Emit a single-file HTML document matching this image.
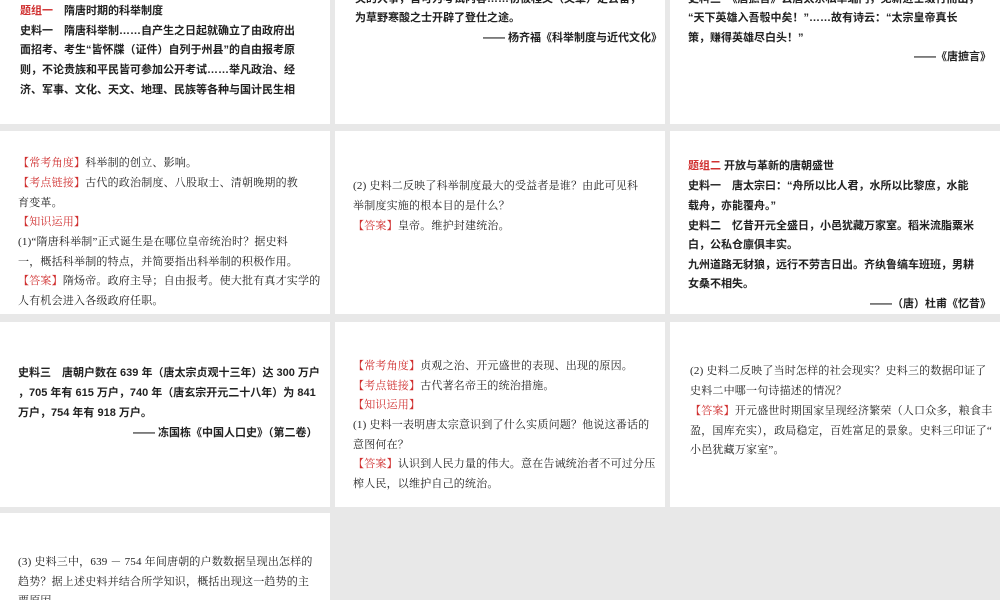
<!DOCTYPE html>
<html><head><meta charset="utf-8"><style>
body{margin:0;width:1000px;height:600px;background:#e8e8e8;position:relative;overflow:hidden;font-family:"Liberation Serif","Noto Serif CJK SC","Noto Sans CJK SC",serif;font-size:11px;color:#222}
.p{position:absolute;background:#fff;overflow:hidden}
.l{position:absolute;white-space:nowrap;line-height:14px;letter-spacing:0.2px}
.b{font-weight:bold;font-family:"Liberation Sans","Noto Sans CJK SC",sans-serif;letter-spacing:0}
.r{color:#d03030}
</style></head><body>
<div class="p" style="left:0;top:0;width:330px;height:124px">
<div class="l b" style="left:20px;top:4px"><span class="r">题组一</span>　隋唐时期的科举制度</div>
<div class="l b" style="left:20px;top:24px">史料一　隋唐科举制……自产生之日起就确立了由政府出</div>
<div class="l b" style="left:20px;top:43px">面招考、考生“皆怀牒（证件）自列于州县”的自由报考原</div>
<div class="l b" style="left:20px;top:63px">则，不论贵族和平民皆可参加公开考试……举凡政治、经</div>
<div class="l b" style="left:20px;top:83px">济、军事、文化、天文、地理、民族等各种与国计民生相</div>
</div>
<div class="p" style="left:335px;top:0;width:330px;height:124px">
<div class="l b" style="left:20px;top:-8px">关的大事，皆可为考试内容……初被程文（文章）定去留，</div>
<div class="l b" style="left:20px;top:11px">为草野寒酸之士开辟了登仕之途。</div>
<div class="l b" style="left:148px;top:31px">—— 杨齐福《科举制度与近代文化》</div>
</div>
<div class="p" style="left:670px;top:0;width:330px;height:124px">
<div class="l b" style="left:18px;top:-8px">史料三　《唐摭言》云唐太宗私幸端门，见新进士缀行而出，</div>
<div class="l b" style="left:18px;top:11px">“天下英雄入吾彀中矣！”……故有诗云：“太宗皇帝真长</div>
<div class="l b" style="left:18px;top:31px">策，赚得英雄尽白头！”</div>
<div class="l b" style="left:244px;top:50px">——《唐摭言》</div>
</div>

<div class="p" style="left:0;top:131px;width:330px;height:183px">
<div class="l" style="left:18px;top:25px"><span class="r">【常考角度】</span>科举制的创立、影响。</div>
<div class="l" style="left:18px;top:45px"><span class="r">【考点链接】</span>古代的政治制度、八股取士、清朝晚期的教</div>
<div class="l" style="left:18px;top:65px">育变革。</div>
<div class="l r" style="left:18px;top:84px">【知识运用】</div>
<div class="l" style="left:18px;top:104px">(1)“隋唐科举制”正式诞生是在哪位皇帝统治时？据史料</div>
<div class="l" style="left:18px;top:124px">一，概括科举制的特点，并简要指出科举制的积极作用。</div>
<div class="l" style="left:18px;top:143px"><span class="r">【答案】</span>隋炀帝。政府主导；自由报考。使大批有真才实学的</div>
<div class="l" style="left:18px;top:163px">人有机会进入各级政府任职。</div>
</div>
<div class="p" style="left:335px;top:131px;width:330px;height:183px">
<div class="l" style="left:18px;top:48px">(2) 史料二反映了科举制度最大的受益者是谁？由此可见科</div>
<div class="l" style="left:18px;top:68px">举制度实施的根本目的是什么？</div>
<div class="l" style="left:18px;top:88px"><span class="r">【答案】</span>皇帝。维护封建统治。</div>
</div>
<div class="p" style="left:670px;top:131px;width:330px;height:183px">
<div class="l b" style="left:18px;top:28px"><span class="r">题组二</span> 开放与革新的唐朝盛世</div>
<div class="l b" style="left:18px;top:48px">史料一　唐太宗曰：“舟所以比人君，水所以比黎庶，水能</div>
<div class="l b" style="left:18px;top:68px">载舟，亦能覆舟。”</div>
<div class="l b" style="left:18px;top:88px">史料二　忆昔开元全盛日，小邑犹藏万家室。稻米流脂粟米</div>
<div class="l b" style="left:18px;top:107px">白，公私仓廪俱丰实。</div>
<div class="l b" style="left:18px;top:127px">九州道路无豺狼，远行不劳吉日出。齐纨鲁缟车班班，男耕</div>
<div class="l b" style="left:18px;top:146px">女桑不相失。</div>
<div class="l b" style="left:200px;top:166px">——（唐）杜甫《忆昔》</div>
</div>

<div class="p" style="left:0;top:322px;width:330px;height:185px">
<div class="l b" style="left:18px;top:44px">史料三　唐朝户数在 639 年（唐太宗贞观十三年）达 300 万户</div>
<div class="l b" style="left:18px;top:64px">，705 年有 615 万户，740 年（唐玄宗开元二十八年）为 841</div>
<div class="l b" style="left:18px;top:84px">万户，754 年有 918 万户。</div>
<div class="l b" style="left:133px;top:104px">—— 冻国栋《中国人口史》（第二卷）</div>
</div>
<div class="p" style="left:335px;top:322px;width:330px;height:185px">
<div class="l" style="left:18px;top:37px"><span class="r">【常考角度】</span>贞观之治、开元盛世的表现、出现的原因。</div>
<div class="l" style="left:18px;top:57px"><span class="r">【考点链接】</span>古代著名帝王的统治措施。</div>
<div class="l r" style="left:18px;top:76px">【知识运用】</div>
<div class="l" style="left:18px;top:96px">(1) 史料一表明唐太宗意识到了什么实质问题？他说这番话的</div>
<div class="l" style="left:18px;top:116px">意图何在？</div>
<div class="l" style="left:18px;top:135px"><span class="r">【答案】</span>认识到人民力量的伟大。意在告诫统治者不可过分压</div>
<div class="l" style="left:18px;top:155px">榨人民，以维护自己的统治。</div>
</div>
<div class="p" style="left:670px;top:322px;width:330px;height:185px">
<div class="l" style="left:20px;top:42px">(2) 史料二反映了当时怎样的社会现实？史料三的数据印证了</div>
<div class="l" style="left:20px;top:62px">史料二中哪一句诗描述的情况？</div>
<div class="l" style="left:20px;top:82px"><span class="r">【答案】</span>开元盛世时期国家呈现经济繁荣（人口众多，粮食丰</div>
<div class="l" style="left:20px;top:102px">盈，国库充实），政局稳定，百姓富足的景象。史料三印证了“</div>
<div class="l" style="left:20px;top:121px">小邑犹藏万家室”。</div>
</div>

<div class="p" style="left:0;top:513px;width:330px;height:87px">
<div class="l" style="left:18px;top:42px">(3) 史料三中，639 － 754 年间唐朝的户数数据呈现出怎样的</div>
<div class="l" style="left:18px;top:62px">趋势？据上述史料并结合所学知识，概括出现这一趋势的主</div>
<div class="l" style="left:18px;top:81px">要原因。</div>
</div>
</body></html>
